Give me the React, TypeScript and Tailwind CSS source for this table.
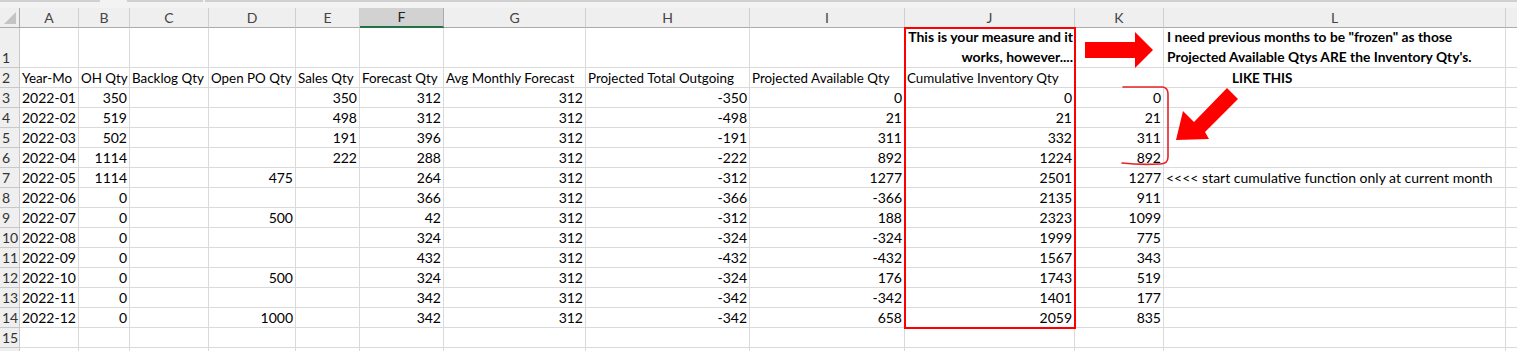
import React from 'react'

const cols = ['A', 'B', 'C', 'D', 'E', 'F', 'G', 'H', 'I', 'J', 'K', 'L', '']
const widths = ['w-[59px]', 'w-[51px]', 'w-[79px]', 'w-[87px]', 'w-[64px]', 'w-[84px]', 'w-[142px]', 'w-[164px]', 'w-[155px]', 'w-[170px]', 'w-[89px]', 'w-[342px]', 'w-[40px]']

const months = ['01', '02', '03', '04', '05', '06', '07', '08', '09', '10', '11', '12']
const oh = ['350', '519', '502', '1114', '1114', '0', '0', '0', '0', '0', '0', '0']
const openPo = ['', '', '', '', '475', '', '500', '', '', '500', '', '1000']
const sales = ['350', '498', '191', '222', '', '', '', '', '', '', '', '']
const forecast = ['312', '312', '396', '288', '264', '366', '42', '324', '432', '324', '342', '342']
const outgoing = ['-350', '-498', '-191', '-222', '-312', '-366', '-312', '-324', '-432', '-324', '-342', '-342']
const available = ['0', '21', '311', '892', '1277', '-366', '188', '-324', '-432', '176', '-342', '658']
const cumulative = ['0', '21', '332', '1224', '2501', '2135', '2323', '1999', '1567', '1743', '1401', '2059']
const wanted = ['0', '21', '311', '892', '1277', '911', '1099', '775', '343', '519', '177', '835']

type Cell = { text?: string; right?: boolean; bold?: boolean; pad?: string }

function Row({ num, cells, tall, small }: { num?: number; cells: Cell[]; tall?: boolean; small?: boolean }) {
  const h = tall ? 'h-[40px]' : 'h-[20px]'
  return (
    <div className="flex">
      <div className={`${h} w-[20px] shrink-0 border-r border-b border-[#c8c8c8] bg-[#efefef] pl-[2px] flex items-end text-[#333] leading-[18px]`}>
        {num}
      </div>
      {widths.map((w, i) => {
        const c = cells[i] || {}
        return (
          <div
            key={i}
            className={`${h} ${w} shrink-0 border-r border-b border-[#dadada] flex items-end px-[2px] whitespace-nowrap leading-[18px] ${small ? 'text-[13.4px]' : ''} ${c.right ? 'justify-end' : ''} ${c.bold ? 'font-bold' : ''} ${c.pad || ''}`}
          >
            {c.text}
          </div>
        )
      })}
    </div>
  )
}

export default function App() {
  return (
    <div className="relative w-[1517px] h-[351px] overflow-hidden bg-white text-[14px] text-black" style={{ fontFamily: 'Lato, "Open Sans", sans-serif' }}>
      {/* strip under the formula bar */}
      <div className="flex h-[8px] bg-[#f3f3f3]">
        <div className="h-[2px] w-[100px] bg-[#d0d0d0]" />
        <div className="h-[2px] w-[27px]" />
        <div className="h-[2px] w-[76px] bg-[#d0d0d0]" />
        <div className="h-[2px] w-[2px]" />
        <div className="h-[2px] flex-1 bg-[#d0d0d0]" />
      </div>

      {/* column letters */}
      <div className="flex bg-[#efefef] text-[#444]">
        <div className="relative h-[20px] w-[20px] shrink-0 border-r border-b border-[#ababab]">
          <svg className="absolute left-0 top-0" width="20" height="20">
            <polygon points="4,16 16,4 16,16" fill="#c4c4c4" />
          </svg>
        </div>
        {cols.map((c, i) => (
          <div
            key={i}
            className={`h-[20px] ${widths[i]} shrink-0 flex items-center justify-center leading-[18px] ${
              c === 'F' ? 'bg-[#d2d2d2] border-r border-[#ababab] border-b-2 border-b-[#217346] text-[#222]' : 'border-r border-b border-r-[#d0d0d0] border-b-[#ababab]'
            }`}
          >
            {c}
          </div>
        ))}
      </div>

      <Row num={1} tall cells={[]} />
      <Row
        num={2}
        small
        cells={[
          { text: 'Year-Mo' },
          { text: 'OH Qty' },
          { text: 'Backlog Qty' },
          { text: 'Open PO Qty' },
          { text: 'Sales Qty' },
          { text: 'Forecast Qty' },
          { text: 'Avg Monthly Forecast' },
          { text: 'Projected Total Outgoing' },
          { text: 'Projected Available Qty' },
          { text: 'Cumulative Inventory Qty' },
          {},
          { text: 'LIKE THIS', bold: true, pad: 'pl-[68px]' },
        ]}
      />
      {months.map((m, i) => (
        <Row
          key={m}
          num={i + 3}
          cells={[
            { text: `2022-${m}` },
            { text: oh[i], right: true },
            {},
            { text: openPo[i], right: true },
            { text: sales[i], right: true },
            { text: forecast[i], right: true },
            { text: '312', right: true },
            { text: outgoing[i], right: true },
            { text: available[i], right: true },
            { text: cumulative[i], right: true },
            { text: wanted[i], right: true },
            { text: i === 4 ? '<<<< start cumulative function only at current month' : '' },
          ]}
        />
      ))}
      <Row num={15} cells={[]} />
      <Row cells={[]} />

      {/* notes in row 1 */}
      <div className="absolute left-[905px] top-[28px] w-[170px] h-[39px] px-[2px] flex flex-col items-end justify-end font-bold leading-[20px] text-right whitespace-nowrap">
        <div>This is your measure and it</div>
        <div>works, however....</div>
      </div>
      <div className="absolute left-[1164px] top-[28px] w-[342px] h-[39px] px-[3px] flex flex-col justify-end font-bold leading-[20px] whitespace-nowrap text-[13.8px]">
        <div>I need previous months to be "frozen" as those</div>
        <div>Projected Available Qtys ARE the Inventory Qty's.</div>
      </div>

      {/* red box around column J */}
      <div className="absolute left-[904px] top-[27px] w-[172px] h-[302px] border-2 border-[#ff0000]" />

      {/* hand drawn arrows and bracket */}
      <svg className="absolute left-0 top-0 pointer-events-none" width="1517" height="351">
        <polygon points="1085,42 1135,42 1135,32 1153,50 1135,68 1135,58 1085,58" fill="#ff0000" />
        <path d="M1123,87 L1163,87 Q1168,88 1168,94 L1168,157 Q1168,164 1160,164 Q1140,165 1122,163" fill="none" stroke="#e8212a" strokeWidth="1.6" strokeLinecap="round" />
        <polygon points="1176,140 1183,111 1194,122 1227,88 1238,99 1205,132 1209,139" fill="#ff0000" />
      </svg>
    </div>
  )
}
